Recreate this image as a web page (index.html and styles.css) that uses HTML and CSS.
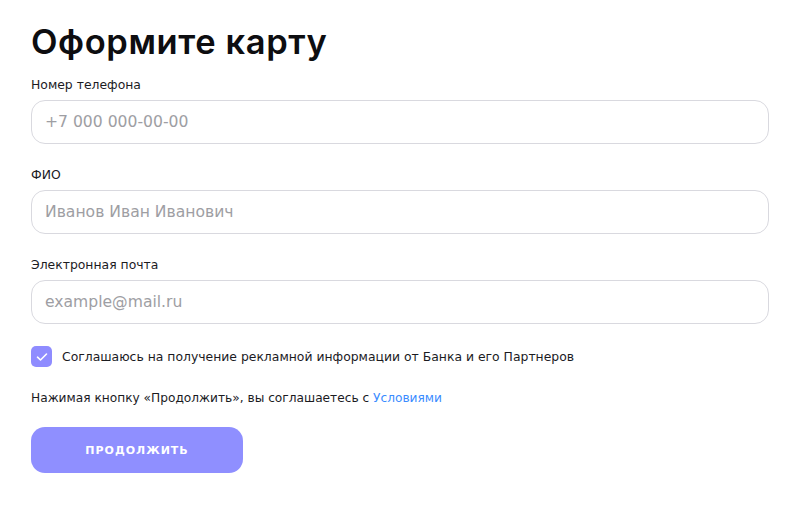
FILE: index.html
```html
<!DOCTYPE html>
<html lang="ru">
<head>
<meta charset="utf-8">
<title>Оформите карту</title>
<link rel="stylesheet" href="styles.css">
</head>
<body>
<main class="form-page">
  <h1 class="title">Оформите карту</h1>
  <form class="form">
    <div class="field">
      <label class="label" for="phone">Номер телефона</label>
      <input class="input" id="phone" type="tel" placeholder="+7 000 000-00-00">
    </div>
    <div class="field">
      <label class="label" for="fio">ФИО</label>
      <input class="input" id="fio" type="text" placeholder="Иванов Иван Иванович">
    </div>
    <div class="field">
      <label class="label" for="email">Электронная почта</label>
      <input class="input" id="email" type="email" placeholder="example@mail.ru">
    </div>
    <label class="consent">
      <span class="checkbox">
        <svg width="12" height="10" viewBox="0 0 12 10"><path d="M1.5 5.2 L4.5 8 L10.5 2" fill="none" stroke="#fff" stroke-width="1.6" stroke-linecap="round" stroke-linejoin="round"/></svg>
      </span>
      <span class="consent-text">Соглашаюсь на получение рекламной информации от Банка и его Партнеров</span>
    </label>
    <p class="terms">Нажимая кнопку «Продолжить», вы соглашаетесь с <a class="link" href="#">Условиями</a></p>
    <button class="submit" type="button">Продолжить</button>
  </form>
</main>
</body>
</html>
```

FILE: styles.css
```css
* { box-sizing: border-box; }
html, body { margin: 0; padding: 0; background: #fff; }
body {
  font-family: "DejaVu Sans", "Noto Sans", sans-serif;
  color: #1b1b1f;
}
.form-page {
  padding: 22px 31px 0 31px;
  width: 800px;
}
.title {
  margin: 0;
  font-family: Inter, "DejaVu Sans", sans-serif;
  font-size: 34.5px;
  line-height: 40px;
  font-weight: 600;
  color: #0d0d10;
  letter-spacing: 0.6px;
}
.form {
  display: flex;
  flex-direction: column;
  margin-top: 15px;
}
.field {
  display: flex;
  flex-direction: column;
  margin-bottom: 23px;
}
.label {
  font-size: 12.4px;
  line-height: 16px;
  margin-bottom: 7px;
}
.input {
  width: 738px;
  height: 44px;
  border: 1px solid #d9d9df;
  border-radius: 14px;
  padding: 0 13px;
  font-family: inherit;
  font-size: 15.6px;
  color: #1b1b1f;
  outline: none;
  background: #fff;
}
.input::placeholder { color: #9e9ea3; }
.consent {
  display: flex;
  align-items: center;
  gap: 10px;
  margin-top: -1px;
}
.checkbox {
  width: 21px;
  height: 21px;
  border-radius: 5px;
  background: #8f8cff;
  display: flex;
  align-items: center;
  justify-content: center;
}
.consent-text {
  font-size: 12.4px;
  line-height: 16px;
}
.terms {
  margin: 23px 0 0 0;
  font-size: 12.2px;
  line-height: 16px;
}
.link {
  color: #3b8cff;
  text-decoration: none;
}
.submit {
  margin-top: 21px;
  width: 212px;
  height: 46px;
  border: none;
  border-radius: 14px;
  background: #8f8fff;
  color: #fff;
  font-family: inherit;
  font-weight: 700;
  font-size: 11px;
  letter-spacing: 1px;
  text-transform: uppercase;
  cursor: pointer;
}
```
